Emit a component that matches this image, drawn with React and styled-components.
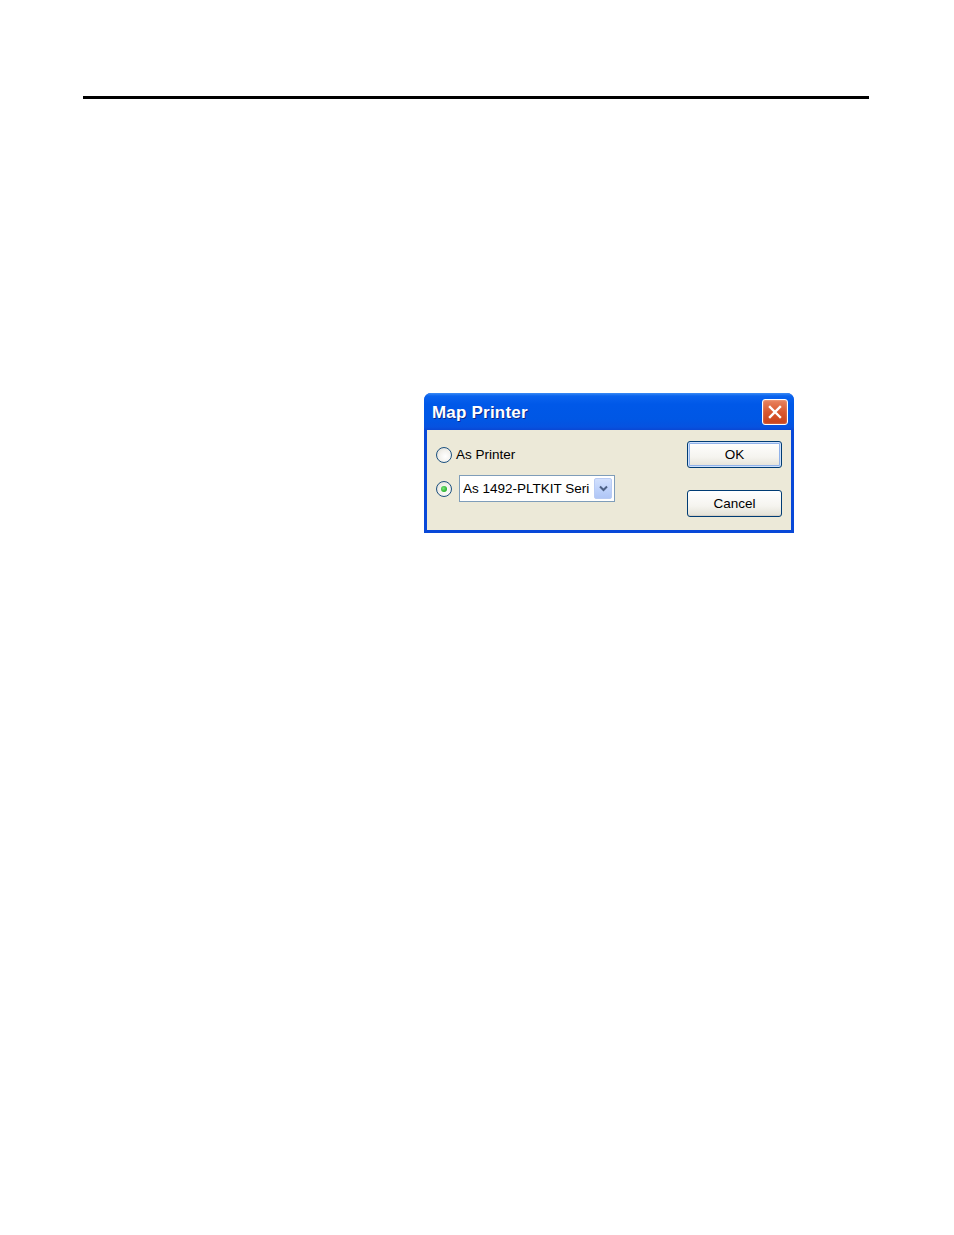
import React from 'react';
import styled, { createGlobalStyle } from 'styled-components';

const GlobalStyle = createGlobalStyle`
  html, body {
    margin: 0;
    padding: 0;
    background: #ffffff;
  }
  body {
    font-family: "Liberation Sans", Arial, sans-serif;
  }
`;

const Page = styled.div`
  width: 954px;
  min-height: 1235px;
  background: #ffffff;
  padding-top: 96px;
  box-sizing: border-box;
`;

const Rule = styled.div`
  margin-left: 83px;
  width: 786px;
  height: 3px;
  background: #000000;
`;

const Dialog = styled.div`
  margin: 294px 0 0 424px;
  width: 370px;
  border-radius: 7px 7px 0 0;
  background: #0848d8;
  overflow: hidden;
`;

const TitleBar = styled.div`
  height: 37px;
  box-sizing: border-box;
  display: flex;
  align-items: center;
  justify-content: space-between;
  padding: 2px 6px 0 8px;
  background: linear-gradient(
    to bottom,
    #3b8cf5 0%,
    #0a63ee 8%,
    #0058e8 30%,
    #0057e5 70%,
    #0652e0 92%,
    #0a47d4 100%
  );
`;

const Title = styled.span`
  font-family: "Liberation Sans", Arial, sans-serif;
  font-weight: 700;
  font-size: 17px;
  color: #ffffff;
  letter-spacing: 0.2px;
  text-shadow: 1px 1px 0 #0b2a8a;
`;

const CloseButton = styled.div`
  width: 24px;
  height: 24px;
  margin-top: -1px;
  border: 1px solid #ffffff;
  border-radius: 3px;
  background: linear-gradient(to bottom, #e9845f 0%, #d9582f 50%, #c8421b 100%);
  display: flex;
  align-items: center;
  justify-content: center;
  box-shadow: inset 0 0 2px rgba(255, 255, 255, 0.5);
`;

const Body = styled.div`
  margin: 0 3px 3px 3px;
  height: 100px;
  background: #ece9d8;
  display: flex;
  justify-content: space-between;
  padding: 11px 9px 0 9px;
  box-sizing: border-box;
`;

const Options = styled.div`
  display: flex;
  flex-direction: column;
  gap: 7px;
`;

const OptionRow = styled.div`
  height: 27px;
  display: flex;
  align-items: center;
  gap: ${({ wide }) => (wide ? '7px' : '4px')};
`;

const Radio = styled.span`
  width: 14px;
  height: 14px;
  border-radius: 50%;
  border: 1px solid #1c5180;
  background: radial-gradient(circle at 60% 60%, #ffffff 0%, #f2f1ec 50%, #d7d5cb 100%);
  display: flex;
  align-items: center;
  justify-content: center;

  &::after {
    content: '';
    display: ${({ checked }) => (checked ? 'block' : 'none')};
    width: 6px;
    height: 6px;
    border-radius: 50%;
    background: radial-gradient(circle at 40% 40%, #7ce47c 0%, #29b02b 70%, #1a8a1c 100%);
  }
`;

const Label = styled.span`
  font-size: 13.5px;
  color: #000000;
`;

const Combo = styled.div`
  width: 156px;
  height: 27px;
  box-sizing: border-box;
  border: 1px solid #7f9db9;
  background: #ffffff;
  display: flex;
  align-items: center;
  justify-content: space-between;
  padding: 0 2px 0 3px;
`;

const ComboText = styled.span`
  font-size: 13.5px;
  color: #000000;
  white-space: nowrap;
  overflow: hidden;
`;

const ComboArrow = styled.span`
  width: 18px;
  height: 21px;
  box-sizing: border-box;
  border: 1px solid #b9cbf3;
  border-radius: 2px;
  background: linear-gradient(to bottom, #d2e0fd 0%, #bcd0fa 60%, #b0c6f6 100%);
  display: flex;
  align-items: center;
  justify-content: center;
  flex-shrink: 0;
`;

const Buttons = styled.div`
  display: flex;
  flex-direction: column;
  gap: 22px;
`;

const Button = styled.div`
  width: 95px;
  height: 27px;
  box-sizing: border-box;
  border: 1px solid #003c74;
  border-radius: 3px;
  background: linear-gradient(to bottom, #ffffff 0%, #f5f4ef 60%, #e3e1d6 100%);
  display: flex;
  align-items: center;
  justify-content: center;
  font-size: 13.5px;
  color: #000000;
  box-shadow: ${({ focused }) =>
    focused
      ? 'inset 0 0 0 1px #cde0fb, inset 0 0 0 2px #90b2ea'
      : 'inset 0 -1px 0 #d6d0c5'};
`;

function App() {
  return (
    <Page>
      <GlobalStyle />
      <Rule />
      <Dialog>
        <TitleBar>
          <Title>Map Printer</Title>
          <CloseButton>
            <svg width="14" height="14" viewBox="0 0 14 14">
              <path d="M2 2 L12 12 M12 2 L2 12" stroke="#ffffff" strokeWidth="2.4" strokeLinecap="square" />
            </svg>
          </CloseButton>
        </TitleBar>
        <Body>
          <Options>
            <OptionRow>
              <Radio />
              <Label>As Printer</Label>
            </OptionRow>
            <OptionRow wide>
              <Radio checked />
              <Combo>
                <ComboText>As 1492-PLTKIT Seri</ComboText>
                <ComboArrow>
                  <svg width="9" height="7" viewBox="0 0 9 7">
                    <path d="M1 1.5 L4.5 5 L8 1.5" fill="none" stroke="#4d6185" strokeWidth="2" />
                  </svg>
                </ComboArrow>
              </Combo>
            </OptionRow>
          </Options>
          <Buttons>
            <Button focused>OK</Button>
            <Button>Cancel</Button>
          </Buttons>
        </Body>
      </Dialog>
    </Page>
  );
}

export default App;
